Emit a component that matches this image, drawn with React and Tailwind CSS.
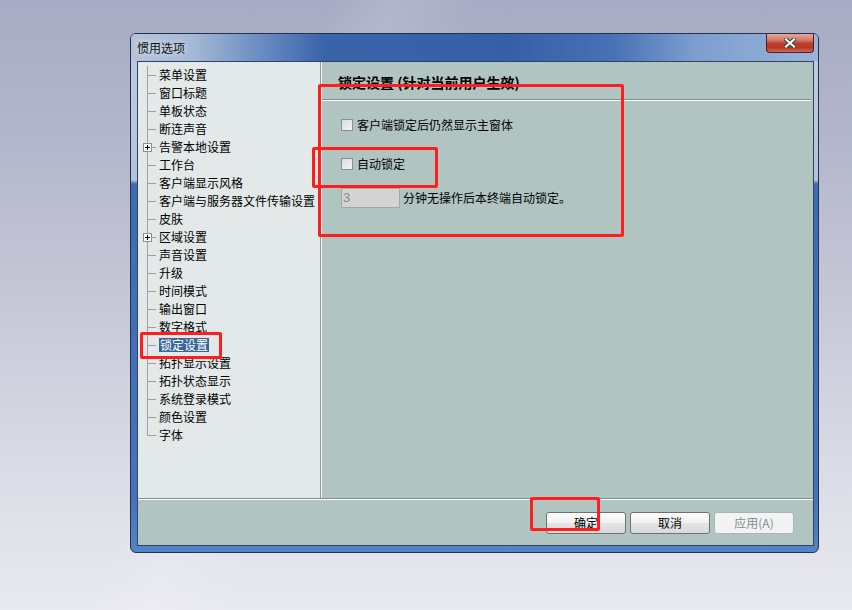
import React from "react";

const items = [
  { label: "菜单设置" },
  { label: "窗口标题" },
  { label: "单板状态" },
  { label: "断连声音" },
  { label: "告警本地设置", plus: true },
  { label: "工作台" },
  { label: "客户端显示风格" },
  { label: "客户端与服务器文件传输设置" },
  { label: "皮肤" },
  { label: "区域设置", plus: true },
  { label: "声音设置" },
  { label: "升级" },
  { label: "时间模式" },
  { label: "输出窗口" },
  { label: "数字格式" },
  { label: "锁定设置", selected: true },
  { label: "拓扑显示设置" },
  { label: "拓扑状态显示" },
  { label: "系统登录模式" },
  { label: "颜色设置" },
  { label: "字体" },
];

function TreeRow({ label, plus, selected, last }) {
  return (
    <div className="flex h-[18px] items-center leading-[14px]">
      <svg width="21" height="18" className="shrink-0">
        <line x1="9.5" y1="0" x2="9.5" y2={last ? 9.5 : 18} stroke="#a0a0a0" />
        <line x1="9.5" y1="9.5" x2="18" y2="9.5" stroke="#a0a0a0" />
        {plus && (
          <g>
            <rect x="5.5" y="5.5" width="8" height="8" fill="#fff" stroke="#8e8e8e" />
            <line x1="7" y1="9.5" x2="12" y2="9.5" stroke="#000" />
            <line x1="9.5" y1="7" x2="9.5" y2="12" stroke="#000" />
          </g>
        )}
      </svg>
      <span className={selected ? "bg-[#3a6796] text-white px-px" : "text-black"}>{label}</span>
    </div>
  );
}

function Checkbox() {
  return (
    <div className="w-[12px] h-[12px] shrink-0 border border-[#8a8d8f] bg-[linear-gradient(135deg,#d9dcdc,#f4f6f6)]" />
  );
}

function Button({ children, disabled }) {
  return (
    <div
      className={
        disabled
          ? "w-[80px] h-[22px] rounded-[3px] border border-[#adb2b5] bg-[#f2f4f4] text-[#8a8a8a] flex items-center justify-center leading-[14px]"
          : "w-[80px] h-[22px] rounded-[3px] border border-[#707070] bg-[linear-gradient(to_bottom,#fbfbfb_0%,#f1f1f1_50%,#e4e4e4_51%,#dadada_100%)] text-black flex items-center justify-center leading-[14px]"
      }
    >
      {children}
    </div>
  );
}

export default function App() {
  return (
    <div className="relative w-[852px] h-[610px] overflow-hidden pt-[33px] pl-[130px] text-[12px] font-['Noto_Sans_CJK_SC','Noto_Sans',sans-serif] bg-[linear-gradient(112deg,transparent_30%,rgba(255,255,255,0.12)_36%,transparent_44%),linear-gradient(to_bottom,#a7abc3_0%,#b2b5ca_20%,#c6c8d7_50%,#dcdce6_78%,#e9e9f0_100%)]">
      {/* dialog window */}
      <div className="w-[689px] h-[520px] rounded-[6px] border border-[#23314c] flex flex-col overflow-hidden bg-[linear-gradient(to_bottom,#bfcbe0_0px,#b4c3da_146px,#3f6bb5_150px,#4673bb_90%,#5583c8_100%)]">
        <div className="h-[27px] shrink-0 flex bg-[linear-gradient(90deg,#b5c4da_0%,#a5b8d5_9%,#6f90c4_18%,#3a64aa_28%,#3560a8_55%,#4771b5_70%,#7c9ecf_82%,#9ab3da_100%)]">
          <div className="flex-1 pl-[6px] flex items-center text-[#111] [text-shadow:0_0_6px_rgba(255,255,255,0.9)]">
            惯用选项
          </div>
          <div className="w-[48px] h-[19px] mr-[4px] rounded-b-[4px] border border-t-0 border-[#4a2222] flex items-center justify-center bg-[linear-gradient(to_bottom,#e3a79a_0%,#d27a6a_35%,#c0402f_50%,#b93726_75%,#d06a55_100%)]">
            <svg width="12" height="10" viewBox="0 0 12 10">
              <path d="M2 1.5 L10 8.5 M10 1.5 L2 8.5" stroke="#3a3a3a" strokeWidth="4" strokeLinecap="square" />
              <path d="M2 1.5 L10 8.5 M10 1.5 L2 8.5" stroke="#fff" strokeWidth="2.2" strokeLinecap="square" />
            </svg>
          </div>
        </div>

        <div className="ml-[6px] mr-[4px] mb-[6px] flex-1 border border-[#33435e] flex flex-col bg-[#b0c4c2]">
          <div className="h-[436px] flex">
            {/* tree */}
            <div className="w-[182px] bg-[#e3e9e8] pt-[4px]">
              {items.map((it, i) => (
                <TreeRow key={it.label} {...it} last={i === items.length - 1} />
              ))}
            </div>
            <div className="w-px bg-[#8e9b9a]" />
            <div className="w-px bg-[#f2f5f5]" />

            {/* lock settings page */}
            <div className="flex-1 flex flex-col">
              <div className="h-[37px] pt-[12px] pl-[16px] text-[14px] font-bold leading-[16px] text-black">
                锁定设置 (针对当前用户生效)
              </div>
              <div className="h-px mr-[2px] bg-[#828c8b]" />
              <div className="h-px mr-[2px] bg-white" />

              <div className="pl-[19px]">
                <div className="mt-[18px] h-[12px] flex items-center leading-[12px]">
                  <Checkbox />
                  <span className="ml-[4px]">客户端锁定后仍然显示主窗体</span>
                </div>
                <div className="mt-[27px] h-[12px] flex items-center leading-[12px]">
                  <Checkbox />
                  <span className="ml-[4px]">自动锁定</span>
                </div>
                <div className="mt-[18px] h-[20px] flex items-center">
                  <div className="w-[59px] h-[20px] border border-[#a2a6a6] bg-[#d3d3d3] pl-[1px] flex items-center text-[#888] font-['Liberation_Sans',sans-serif] text-[13px] leading-[14px]">
                    3
                  </div>
                  <span className="ml-[3px] leading-[14px]">分钟无操作后本终端自动锁定。</span>
                </div>
              </div>
            </div>
          </div>
          <div className="h-px bg-[#838f8e]" />
          <div className="h-px bg-white" />
          <div className="flex-1 flex justify-end items-start pt-[12px] pr-[19px] gap-[4px]">
            <Button>确定</Button>
            <Button>取消</Button>
            <Button disabled>应用(A)</Button>
          </div>
        </div>
      </div>

      {/* red annotation boxes */}
      <div className="absolute left-[318px] top-[84px] w-[306px] h-[153px] rounded-[2px] border-[3px] border-[#ff1e1e]" />
      <div className="absolute left-[312px] top-[147px] w-[126px] h-[41px] rounded-[2px] border-[3px] border-[#ff1e1e]" />
      <div className="absolute left-[140px] top-[332px] w-[82px] h-[27px] rounded-[2px] border-[3px] border-[#ff1e1e]" />
      <div className="absolute left-[530px] top-[497px] w-[70px] h-[34px] rounded-[2px] border-[3px] border-[#ff1e1e]" />
    </div>
  );
}
